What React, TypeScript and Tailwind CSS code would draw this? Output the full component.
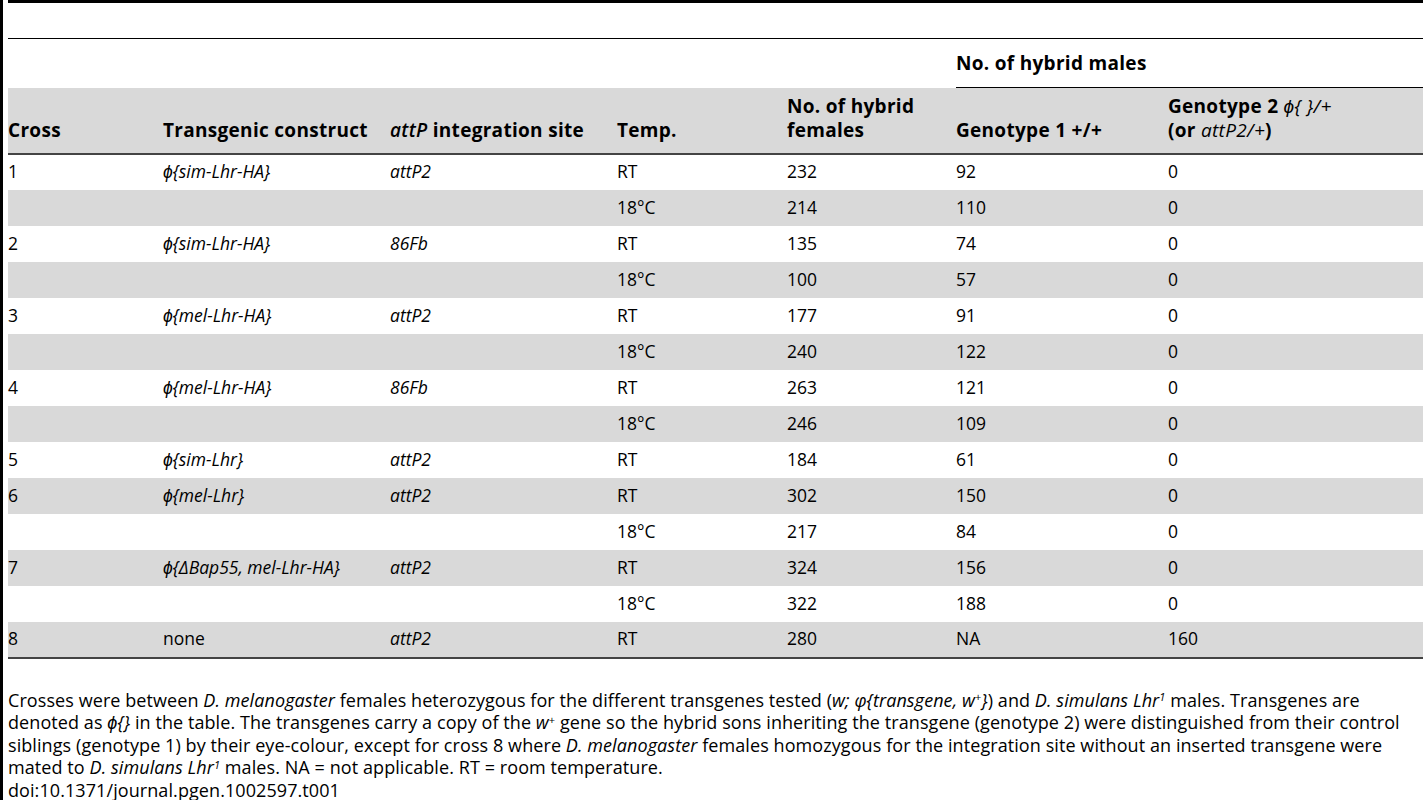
import React from "react";

type Row = {
  cross?: string;
  construct?: React.ReactNode;
  site?: string;
  temp: string;
  females: string;
  g1: string;
  g2: string;
};

const phi = (inner: React.ReactNode) => (
  <span className="italic">
    {"\u03d5{"}
    {inner}
    {"}"}
  </span>
);

const rows: Row[] = [
  { cross: "1", construct: phi("sim-Lhr-HA"), site: "attP2", temp: "RT", females: "232", g1: "92", g2: "0" },
  { temp: "18°C", females: "214", g1: "110", g2: "0" },
  { cross: "2", construct: phi("sim-Lhr-HA"), site: "86Fb", temp: "RT", females: "135", g1: "74", g2: "0" },
  { temp: "18°C", females: "100", g1: "57", g2: "0" },
  { cross: "3", construct: phi("mel-Lhr-HA"), site: "attP2", temp: "RT", females: "177", g1: "91", g2: "0" },
  { temp: "18°C", females: "240", g1: "122", g2: "0" },
  { cross: "4", construct: phi("mel-Lhr-HA"), site: "86Fb", temp: "RT", females: "263", g1: "121", g2: "0" },
  { temp: "18°C", females: "246", g1: "109", g2: "0" },
  { cross: "5", construct: phi("sim-Lhr"), site: "attP2", temp: "RT", females: "184", g1: "61", g2: "0" },
  { cross: "6", construct: phi("mel-Lhr"), site: "attP2", temp: "RT", females: "302", g1: "150", g2: "0" },
  { temp: "18°C", females: "217", g1: "84", g2: "0" },
  { cross: "7", construct: phi("\u0394Bap55, mel-Lhr-HA"), site: "attP2", temp: "RT", females: "324", g1: "156", g2: "0" },
  { temp: "18°C", females: "322", g1: "188", g2: "0" },
  { cross: "8", construct: "none", site: "attP2", temp: "RT", females: "280", g1: "NA", g2: "160" },
];

export default function App() {
  return (
    <div className="flex min-h-[800px] bg-white text-black font-['Open_Sans',sans-serif]">
      <div className="w-[3px] shrink-0 bg-black" />
      <div className="ml-[5px] flex-1">
        <div className="h-[38px] border-t-[3px] border-black" />
        <table className="w-full table-fixed border-collapse border-t border-black text-[17.5px] leading-[22px]">
          <colgroup>
            <col className="w-[155px]" />
            <col className="w-[227px]" />
            <col className="w-[227px]" />
            <col className="w-[170px]" />
            <col className="w-[169px]" />
            <col className="w-[212px]" />
            <col />
          </colgroup>
          <thead className="font-bold text-[19px] leading-[24px] tracking-[0.3px]">
            <tr className="h-[49px]">
              <th colSpan={5} />
              <th colSpan={2} className="border-b border-black text-left align-middle">
                No. of hybrid males
              </th>
            </tr>
            <tr className="h-[66px] bg-[#d9d9d9] border-b-2 border-[#444]">
              <th className="pb-[11px] text-left align-bottom">Cross</th>
              <th className="pb-[11px] text-left align-bottom">Transgenic construct</th>
              <th className="pb-[11px] text-left align-bottom">
                <span className="italic font-semibold">attP</span> integration site
              </th>
              <th className="pb-[11px] text-left align-bottom">Temp.</th>
              <th className="pb-[11px] text-left align-bottom">
                No. of hybrid
                <br />
                females
              </th>
              <th className="pb-[11px] text-left align-bottom">Genotype 1 +/+</th>
              <th className="pb-[11px] text-left align-bottom">
                Genotype 2 <span className="italic font-normal">{"\u03d5{ }/+"}</span>
                <br />
                (or <span className="italic font-normal">attP2/+</span>)
              </th>
            </tr>
          </thead>
          <tbody className="border-b-2 border-[#444]">
            {rows.map((r, i) => (
              <tr key={i} className={i % 2 === 1 ? "h-[36px] bg-[#d9d9d9]" : "h-[36px] bg-white"}>
                <td className="pb-[2px] align-middle">{r.cross}</td>
                <td className="pb-[2px] align-middle">{r.construct}</td>
                <td className="pb-[2px] align-middle italic">{r.site}</td>
                <td className="pb-[2px] align-middle">{r.temp}</td>
                <td className="pb-[2px] align-middle">{r.females}</td>
                <td className="pb-[2px] align-middle">{r.g1}</td>
                <td className="pb-[2px] align-middle">{r.g2}</td>
              </tr>
            ))}
          </tbody>
        </table>
        <div className="pt-[30px] text-[18px] leading-[22.5px] tracking-[0.08px] whitespace-nowrap">
          <p>
            Crosses were between <i>D. melanogaster</i> females heterozygous for the different transgenes tested (
            <i>w; {"\u03c6{transgene, w"}</i>
            <sup className="text-[11px] leading-none">+</sup>
            <i>{"}"}</i>) and <i>D. simulans Lhr</i>
            <sup className="text-[11px] leading-none italic">1</sup> males. Transgenes are
            <br />
            denoted as <i>{"\u03d5{}"}</i> in the table. The transgenes carry a copy of the <i>w</i>
            <sup className="text-[11px] leading-none">+</sup> gene so the hybrid sons inheriting the transgene
            (genotype 2) were distinguished from their control
            <br />
            siblings (genotype 1) by their eye-colour, except for cross 8 where <i>D. melanogaster</i> females
            homozygous for the integration site without an inserted transgene were
            <br />
            mated to <i>D. simulans Lhr</i>
            <sup className="text-[11px] leading-none italic">1</sup> males. NA = not applicable. RT = room
            temperature.
          </p>
          <p>doi:10.1371/journal.pgen.1002597.t001</p>
        </div>
      </div>
    </div>
  );
}
